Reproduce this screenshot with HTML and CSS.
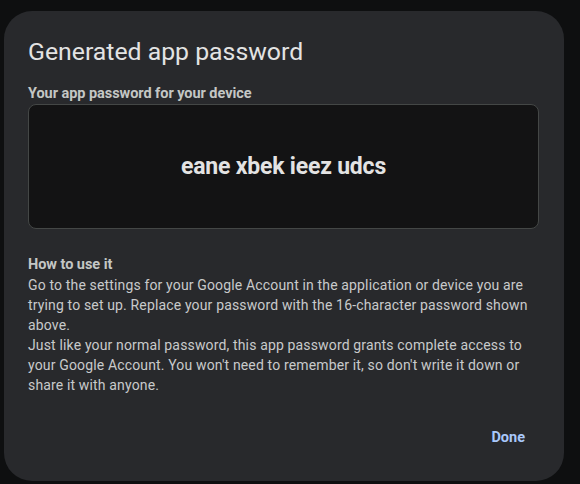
FILE: index.html
```html
<!DOCTYPE html>
<html lang="en">
<head>
<meta charset="utf-8">
<link rel="stylesheet" href="styles.css">
</head>
<body>
<div class="page">
  <div class="dialog">
    <h1 class="title">Generated app password</h1>
    <div class="label">Your app password for your device</div>
    <div class="pwbox"><span class="pw">eane xbek ieez udcs</span></div>
    <div class="howto">How to use it</div>
    <p class="body">Go to the settings for your Google Account in the application or device you are trying to set up. Replace your password with the 16-character password shown above.<br>Just like your normal password, this app password grants complete access to your Google Account. You won't need to remember it, so don't write it down or share it with anyone.</p>
    <div class="actions"><button class="done">Done</button></div>
  </div>
</div>
</body>
</html>
```
FILE: styles.css
```css
html, body {
  margin: 0;
  padding: 0;
  background: #0e0f10;
  font-family: Roboto, "Liberation Sans", sans-serif;
}
.page {
  width: 580px;
  height: 484px;
  padding: 11px 0 0 4px;
  box-sizing: border-box;
}
.dialog {
  width: 560px;
  height: 470px;
  box-sizing: border-box;
  background: #28292c;
  border-radius: 28px;
  padding: 25px 25px 26px 24px;
  display: flex;
  flex-direction: column;
}
.title {
  margin: 0;
  font-weight: 400;
  font-size: 24.8px;
  line-height: 32px;
  color: #e3e3e3;
}
.label {
  margin-top: 16px;
  font-size: 14.5px;
  font-weight: 700;
  line-height: 20px;
  color: #c4c7c5;
  letter-spacing: -0.05px;
}
.pwbox {
  height: 125px;
  box-sizing: border-box;
  background: #131314;
  border: 1px solid #444746;
  border-radius: 8px;
  display: flex;
  align-items: center;
  justify-content: center;
}
.pw {
  font-size: 23px;
  font-weight: 700;
  color: #e3e3e3;
  letter-spacing: -0.2px;
}
.howto {
  margin-top: 26px;
  font-size: 14.5px;
  font-weight: 700;
  line-height: 20px;
  color: #c4c7c5;
  letter-spacing: -0.05px;
}
.body {
  margin: 0;
  font-size: 14px;
  line-height: 20px;
  color: #c8cacb;
  letter-spacing: 0.15px;
}
.actions {
  margin-top: auto;
  display: flex;
  justify-content: flex-end;
}
.done {
  background: none;
  border: none;
  font-family: inherit;
  font-size: 14.5px;
  font-weight: 700;
  color: #a8c7fa;
  height: 36px;
  padding: 0 14px;
}
```
